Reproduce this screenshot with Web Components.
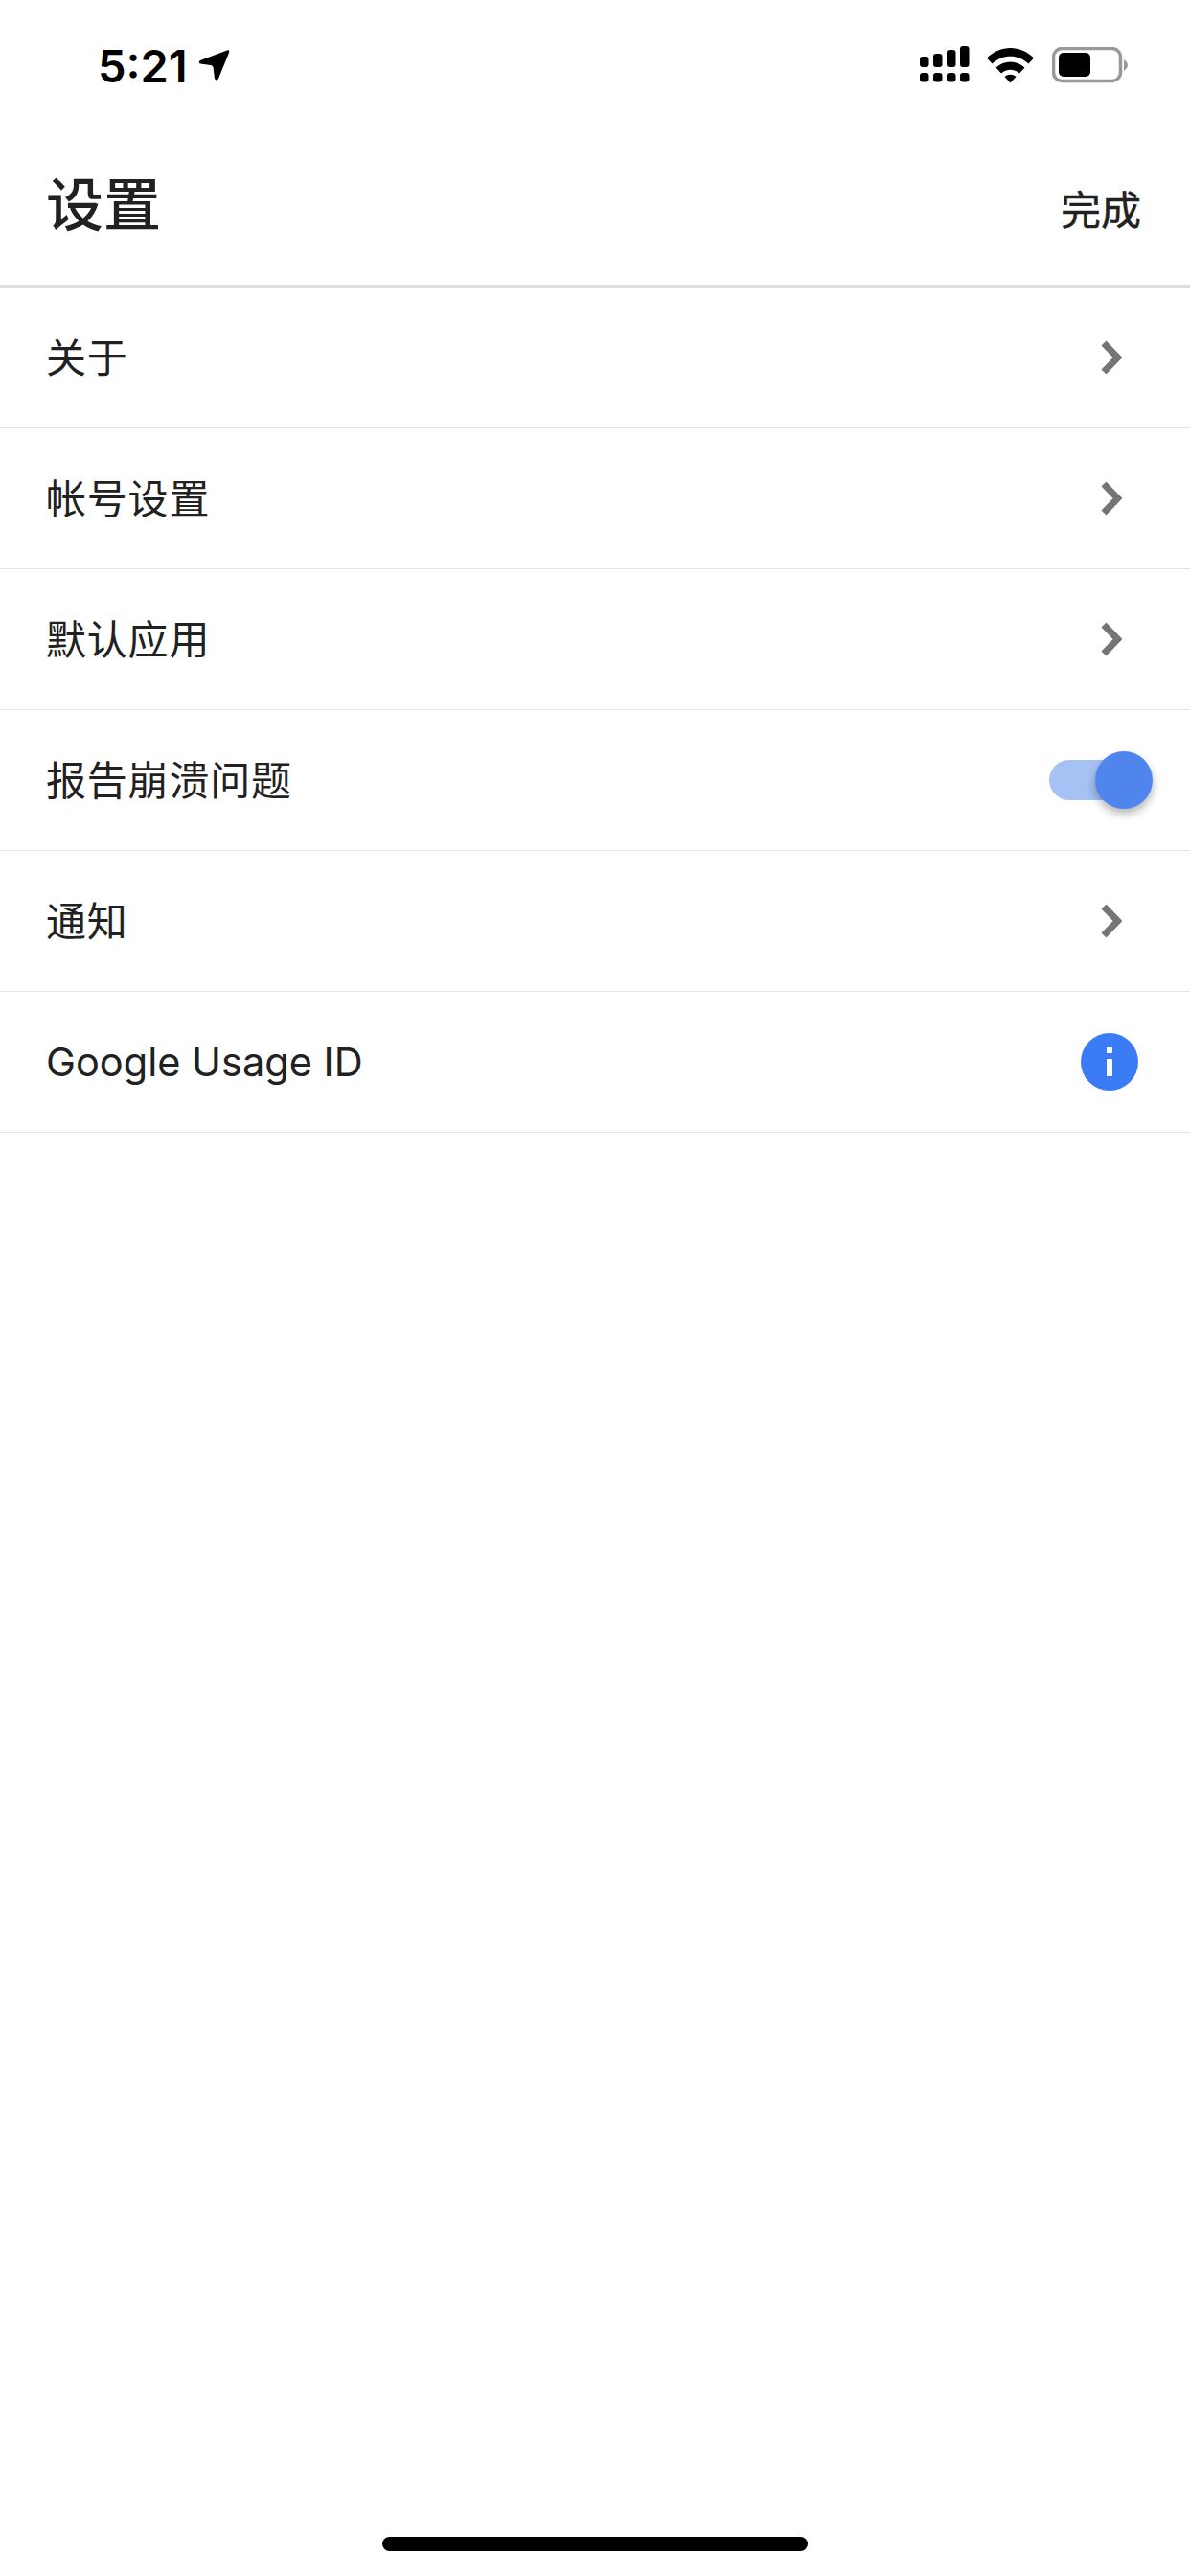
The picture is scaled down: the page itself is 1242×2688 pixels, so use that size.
<!DOCTYPE html>
<html lang="zh-CN">
<head>
<meta charset="utf-8">
<title>设置</title>
<style>
  html, body { margin: 0; padding: 0; background: #fff; }
  body {
    width: 1242px;
    height: 2688px;
    overflow: hidden;
    display: flex;
    flex-direction: column;
    font-family: Inter, "Noto Sans CJK SC", sans-serif;
    color: #212121;
  }
</style>
</head>
<body>
  <status-bar time="5:21"></status-bar>
  <settings-header title-text="设置" action="完成"></settings-header>
  <settings-list>
    <settings-row>关于<row-chevron slot="end"></row-chevron></settings-row>
    <settings-row>帐号设置<row-chevron slot="end"></row-chevron></settings-row>
    <settings-row>默认应用<row-chevron slot="end"></row-chevron></settings-row>
    <settings-row>报告崩溃问题<row-toggle slot="end"></row-toggle></settings-row>
    <settings-row>通知<row-chevron slot="end"></row-chevron></settings-row>
    <settings-row latin>Google Usage ID<row-info slot="end"></row-info></settings-row>
  </settings-list>
  <home-indicator></home-indicator>

<script>
customElements.define('status-bar', class StatusBar extends HTMLElement {
  constructor() {
    super();
    this.attachShadow({mode: 'open'});
    this.shadowRoot.innerHTML = this.template;
  }
  get template() {
    return `<style>
      :host {
        display: flex;
        align-items: center;
        height: 136px;
        box-sizing: border-box;
        padding: 0 65px 0 102px;
        flex: none;
      }
      .time {
        font: 600 47px/1 Inter, sans-serif;
        color: #000;
      }
      .left { display: flex; align-items: center; gap: 10px; }
      .flex { flex: 1; }
      .right { display: flex; align-items: center; }
      svg { display: block; }
      .signal { margin-top: -2px; }
      .wifi { margin-left: 18px; }
      .battery { margin-left: 19px; }
    </style>
    <span class="left">
      <span class="time">${this.getAttribute('time')}</span>
      <svg width="34" height="34" viewBox="0 0 34 34">
        <path d="M31 1.5 L3 12 Q0.5 14 3 15.5 L14 17 Q16 17.5 16.5 19 L18 31 Q20 34 22 31 L33 4 Q34 0.5 31 1.5 Z" fill="#000"/>
      </svg>
    </span>
    <span class="flex"></span>
    <span class="right">
      <svg class="signal" width="52" height="38" viewBox="0 0 52 38" fill="#000">
        <rect x="0" y="11" width="9.5" height="11" rx="3"/>
        <rect x="14" y="8" width="9.5" height="14" rx="3"/>
        <rect x="28" y="4" width="9.5" height="18" rx="3"/>
        <rect x="42" y="0" width="9.5" height="22" rx="3"/>
        <rect x="0" y="28" width="9.5" height="9.5" rx="3"/>
        <rect x="14" y="28" width="9.5" height="9.5" rx="3"/>
        <rect x="28" y="28" width="9.5" height="9.5" rx="3"/>
        <rect x="42" y="28" width="9.5" height="9.5" rx="3"/>
      </svg>
      <svg class="wifi" width="49" height="37" viewBox="0 0 49 37" fill="#000">
        <path d="M0 10.5 C14 -3.5 35 -3.5 49 10.5 L43.5 16.5 C32.5 6 16.5 6 5.5 16.5 Z"/>
        <path d="M9.5 20.5 C18 12.5 31 12.5 39.5 20.5 L34 26.5 C28 21.5 21 21.5 15 26.5 Z"/>
        <path d="M18.5 30 C22 27 27 27 30.5 30 L24.5 36.5 Z"/>
      </svg>
      <svg class="battery" width="79" height="38" viewBox="0 0 79 38">
        <rect x="1.5" y="1.5" width="70" height="34" rx="9" fill="none" stroke="#999" stroke-width="3.5"/>
        <rect x="7" y="6" width="33" height="25" rx="5" fill="#000"/>
        <path d="M75 13 L75 25 Q79 22 79 19 Q79 16 75 13 Z" fill="#999"/>
      </svg>
    </span>`
  }
});

customElements.define('settings-header', class SettingsHeader extends HTMLElement {
  constructor() {
    super();
    this.attachShadow({mode: 'open'});
    this.shadowRoot.innerHTML = this.template;
  }
  get template() {
    return `<style>
      :host {
        display: flex;
        align-items: center;
        height: 164px;
        box-sizing: border-box;
        padding: 0 51px 0 48px;
        border-bottom: 3px solid #dedede;
        flex: none;
      }
      h1 {
        margin: 0 0 13px;
        font: 500 60px/1 "Noto Sans CJK SC", sans-serif;
      }
      .flex { flex: 1; }
      .action {
        font: 400 42px/1 "Noto Sans CJK SC", sans-serif;
        -webkit-text-stroke: 0.4px #212121;
      }
    </style>
    <h1>${this.getAttribute('title-text')}</h1>
    <span class="flex"></span>
    <span class="action">${this.getAttribute('action')}</span>`
  }
});

customElements.define('settings-list', class SettingsList extends HTMLElement {
  constructor() {
    super();
    this.attachShadow({mode: 'open'});
    this.shadowRoot.innerHTML = `<style>
      :host { display: flex; flex-direction: column; flex: none; }
    </style>
    <slot></slot>`;
  }
});

customElements.define('settings-row', class SettingsRow extends HTMLElement {
  constructor() {
    super();
    this.attachShadow({mode: 'open'});
    this.shadowRoot.innerHTML = `<style>
      :host {
        display: flex;
        align-items: center;
        height: 147px;
        box-sizing: border-box;
        padding-left: 48px;
        border-bottom: 1.5px solid #e4e4e4;
        font: 400 42px/1 Inter, "Noto Sans CJK SC", sans-serif;
        letter-spacing: 0.8px;
      }
      :host([latin]) {
        letter-spacing: 0;
        font-size: 41.5px;
      }
      .label { flex: 1; padding-top: 1px; }
      .end {
        display: flex;
        justify-content: flex-end;
        padding-right: 54px;
        flex: none;
      }
    </style>
    <span class="label"><slot></slot></span>
    <span class="end"><slot name="end"></slot></span>`;
  }
});

customElements.define('row-chevron', class RowChevron extends HTMLElement {
  constructor() {
    super();
    this.attachShadow({mode: 'open'});
    this.shadowRoot.innerHTML = `<style>
      :host { display: block; height: 36px; margin-right: 17px; }
      svg { display: block; }
    </style>
    <svg width="22" height="36" viewBox="0 0 22 36">
      <path d="M3 3 L17.5 18 L3 33" fill="none" stroke="#757575" stroke-width="7"/>
    </svg>`;
  }
});

customElements.define('row-toggle', class RowToggle extends HTMLElement {
  constructor() {
    super();
    this.attachShadow({mode: 'open'});
    this.shadowRoot.innerHTML = `<style>
      :host {
        display: block;
        position: relative;
        width: 108px;
        height: 60px;
        margin-right: -15px;
      }
      .track {
        position: absolute;
        left: 0;
        top: 9px;
        width: 84px;
        height: 42px;
        border-radius: 21px;
        background: #a6c1f4;
      }
      .knob {
        position: absolute;
        left: 48px;
        top: 0;
        width: 60px;
        height: 60px;
        border-radius: 50%;
        background: #5085ee;
        box-shadow: 0 5px 10px rgba(0,0,0,.3);
      }
    </style>
    <span class="track"></span>
    <span class="knob"></span>`;
  }
});

customElements.define('row-info', class RowInfo extends HTMLElement {
  constructor() {
    super();
    this.attachShadow({mode: 'open'});
    this.shadowRoot.innerHTML = `<style>
      :host { display: block; height: 60px; }
      svg { display: block; }
    </style>
    <svg width="60" height="60" viewBox="0 0 60 60">
      <circle cx="30" cy="30" r="30" fill="#3b7cf6"/>
      <rect x="27" y="15" width="6" height="6" fill="#fff"/>
      <rect x="27" y="27" width="6" height="18" fill="#fff"/>
    </svg>`;
  }
});

customElements.define('home-indicator', class HomeIndicator extends HTMLElement {
  constructor() {
    super();
    this.attachShadow({mode: 'open'});
    this.shadowRoot.innerHTML = `<style>
      :host {
        display: flex;
        justify-content: center;
        margin-top: auto;
        padding-bottom: 26px;
        flex: none;
      }
      span {
        width: 444px;
        height: 15px;
        border-radius: 8px;
        background: #000;
      }
    </style>
    <span></span>`;
  }
});
</script>
</body>
</html>
